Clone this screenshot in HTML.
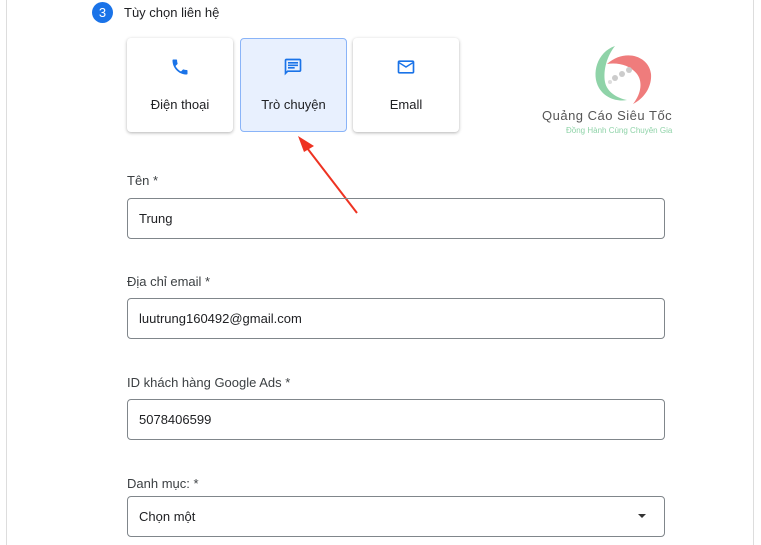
<!DOCTYPE html>
<html><head><meta charset="utf-8"><style>
body{margin:0;width:761px;height:545px;background:#fff;position:relative;overflow:hidden;font-family:"Liberation Sans",Arial,sans-serif;color:#202124}
.lb{position:absolute;left:6px;top:0;width:1px;height:545px;background:#ddd}
.rb{position:absolute;left:753px;top:0;width:1px;height:545px;background:#ddd}
.badge{position:absolute;left:92px;top:2px;width:21px;height:21px;border-radius:50%;background:#1a73e8;color:#fff;font-size:13px;text-align:center;line-height:21px}
.h{position:absolute;left:124px;top:5px;font-size:13px}
.card{position:absolute;top:38px;width:106px;height:94px;border-radius:4px;box-shadow:0 1px 3px rgba(0,0,0,.3);background:#fff;text-align:center;font-size:13px}
.card svg{position:absolute;left:43px;top:19px}
.card span{position:absolute;left:0;right:0;top:59px}
.sel{background:#e8f0fe;box-shadow:none;border:1px solid #8ab4f8;box-sizing:border-box}
.l{position:absolute;left:127px;font-size:13px;color:#3c4043}
.in{position:absolute;left:127px;width:536px;height:39px;border:1px solid #80868b;border-radius:4px;font-size:13px;line-height:39px;padding-left:11px;box-sizing:border-box;width:538px;height:41px}
</style></head><body>
<div class="lb"></div><div class="rb"></div>
<div class="badge">3</div><div class="h">Tùy chọn liên hệ</div>
<div class="card" style="left:127px"><svg width="20" height="20" viewBox="0 0 24 24"><path fill="#1a73e8" d="M6.6 10.8c1.4 2.8 3.8 5.1 6.6 6.6l2.2-2.2c.3-.3.7-.4 1-.2 1.1.4 2.3.6 3.6.6.6 0 1 .4 1 1V20c0 .6-.4 1-1 1C10.6 21 3 13.4 3 4c0-.6.4-1 1-1h3.5c.6 0 1 .4 1 1 0 1.3.2 2.5.6 3.6.1.3 0 .7-.2 1z"/></svg><span>Điện thoại</span></div>
<div class="card sel" style="left:240px;width:107px"><svg width="20" height="20" viewBox="0 0 24 24" style="left:42px;top:18px"><path fill="#1a73e8" d="M20 2H4c-1.1 0-2 .9-2 2v18l4-4h14c1.1 0 2-.9 2-2V4c0-1.1-.9-2-2-2zm0 14H5.2L4 17.2V4h16v12zM6 12h8v2H6zm0-3h12v2H6zm0-3h12v2H6z"/></svg><span style="top:58px">Trò chuyện</span></div>
<div class="card" style="left:353px"><svg width="20" height="20" viewBox="0 0 24 24"><path fill="#1a73e8" d="M20 4H4c-1.1 0-2 .9-2 2v12c0 1.1.9 2 2 2h16c1.1 0 2-.9 2-2V6c0-1.1-.9-2-2-2zm0 14H4V8l8 5 8-5v10zm-8-7L4 6h16l-8 5z"/></svg><span>Emall</span></div>
<svg style="position:absolute;left:585px;top:44px" width="70" height="66" viewBox="0 0 70 66">
<path d="M30 2C12 8 6 30 14 44c6 10 18 14 28 12-10-2-20-8-22-18C18 26 22 12 30 2z" fill="#8fd3a8"/>
<path d="M22 20c18-16 42-8 44 10 1 12-6 24-18 30 8-10 10-22 4-30-6-8-18-12-30-10z" fill="#ef7c7c"/>
<circle cx="30" cy="34" r="3" fill="#ccc"/><circle cx="37" cy="30" r="3" fill="#ccc"/><circle cx="44" cy="26" r="3" fill="#ccc"/><circle cx="25" cy="38" r="2" fill="#ddd"/>
</svg>
<div style="position:absolute;left:542px;top:108px;font-size:13px;color:#555;letter-spacing:.5px">Quảng Cáo Siêu Tốc</div>
<div style="position:absolute;left:566px;top:126px;font-size:8px;color:#8fd3a8">Đồng Hành Cùng Chuyên Gia</div>
<svg style="position:absolute;left:290px;top:130px" width="80" height="90"><line x1="67" y1="83" x2="14" y2="14" stroke="#e32" stroke-width="2"/><path d="M8 6 L24 16 L14 22 z" fill="#e32"/></svg>
<div class="l" style="top:173px">Tên *</div>
<div class="in" style="top:198px">Trung</div>
<div class="l" style="top:274px">Địa chỉ email *</div>
<div class="in" style="top:298px">luutrung160492@gmail.com</div>
<div class="l" style="top:375px">ID khách hàng Google Ads *</div>
<div class="in" style="top:399px">5078406599</div>
<div class="l" style="top:476px">Danh mục: *</div>
<div class="in" style="top:496px">Chọn một<span style="position:absolute;right:18px;top:17px;border:4px solid transparent;border-top:4px solid #333;border-bottom:0;width:0;height:0"></span></div>
</body></html>
